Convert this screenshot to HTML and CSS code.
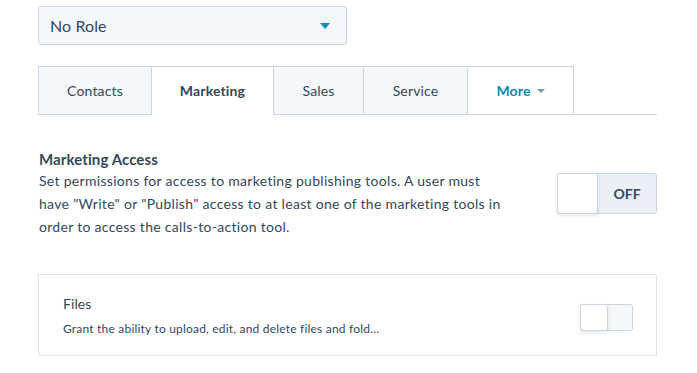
FILE: index.html
```html
<!DOCTYPE html>
<html>
<head>
<meta charset="utf-8">
<link rel="stylesheet" href="styles.css">
</head>
<body>
<div class="page">
  <div class="select">
    <span class="select-label">No Role</span>
    <span class="select-caret"></span>
  </div>

  <div class="tabs">
    <div class="tab tab-contacts">Contacts</div>
    <div class="tab tab-active tab-marketing">Marketing</div>
    <div class="tab tab-sales">Sales</div>
    <div class="tab tab-service">Service</div>
    <div class="tab tab-more">More <span class="more-caret"></span></div>
    <div class="tabs-fill"></div>
  </div>

  <div class="access">
    <div class="access-text">
      <h2 class="access-title">Marketing Access</h2>
      <p class="access-desc">Set permissions for access to marketing publishing tools. A user must have "Write" or "Publish" access to at least one of the marketing tools in order to access the calls-to-action tool.</p>
    </div>
    <div class="toggle">
      <div class="toggle-knob"></div>
      <div class="toggle-label">OFF</div>
    </div>
  </div>

  <div class="card">
    <div class="card-text">
      <div class="card-title">Files</div>
      <div class="card-desc">Grant the ability to upload, edit, and delete files and fold…</div>
    </div>
    <div class="mini-toggle">
      <div class="mini-knob"></div>
      <div class="mini-track"></div>
    </div>
  </div>
</div>
</body>
</html>
```

FILE: styles.css
```css
* { box-sizing: border-box; }
html, body { margin: 0; padding: 0; background: #fff; }
body {
  font-family: Lato, "Open Sans", sans-serif;
  color: #33475b;
}
.page {
  width: 697px;
  padding: 6px 40px 0 38px;
}
.select {
  width: 309px;
  height: 39px;
  background: #f5f8fa;
  border: 1px solid #cbd6e2;
  border-radius: 3px;
  display: flex;
  align-items: center;
  justify-content: space-between;
  padding: 0 16px 0 11px;
}
.select-label { font-size: 16px; color: #33475b; letter-spacing: 0.1px; }
.select-caret {
  width: 0; height: 0;
  border-left: 5.5px solid transparent;
  border-right: 5.5px solid transparent;
  border-top: 6px solid #0091ae;
  margin-top: 1px;
}
.tabs {
  display: flex;
  margin-top: 21px;
  height: 49px;
}
.tab {
  height: 49px;
  display: flex;
  align-items: center;
  justify-content: center;
  font-size: 14px;
  letter-spacing: 0.15px;
  background: #f5f8fa;
  border: 1px solid #cbd6e2;
  border-left: none;
  color: #33475b;
}
.tab-contacts { width: 114px; border-left: 1px solid #cbd6e2; }
.tab-marketing { width: 122px; }
.tab-sales { width: 90px; }
.tab-service { width: 104px; }
.tab-more { width: 106px; }
.tab-active {
  background: #fff;
  border-bottom-color: #fff;
  font-weight: bold;
}
.tab-more {
  background: #fff;
  color: #0091ae;
  font-weight: bold;
}
.more-caret {
  display: inline-block;
  width: 0; height: 0;
  border-left: 4px solid transparent;
  border-right: 4px solid transparent;
  border-top: 4px solid #7c98b6;
  margin-left: 6px;
}
.tabs-fill {
  flex: 1;
  border-bottom: 1px solid #cbd6e2;
}
.access {
  display: flex;
  justify-content: space-between;
  align-items: flex-start;
  margin-top: 35px;
}
.access-text { width: 470px; padding-left: 1px; }
.access-title {
  margin: 0;
  font-size: 15px;
  font-weight: bold;
  line-height: 18px;
  letter-spacing: 0.1px;
}
.access-desc {
  margin: 1px 0 0;
  font-size: 14px;
  line-height: 23px;
  letter-spacing: 0.3px;
}
.toggle {
  margin-top: 23px;
  width: 100px;
  height: 41px;
  display: flex;
  background: #eaf0f6;
  border: 1px solid #cbd6e2;
  border-radius: 3px;
}
.toggle-knob {
  width: 41px;
  height: 41px;
  margin: -1px 0 0 -1px;
  background: #fff;
  border: 1px solid #cbd6e2;
  border-radius: 3px;
  box-shadow: 0 2px 4px rgba(45, 62, 80, 0.12);
}
.toggle-label {
  flex: 1;
  display: flex;
  align-items: center;
  justify-content: center;
  font-size: 14px;
  font-weight: bold;
  color: #33475b;
}
.card {
  margin-top: 36px;
  width: 619px;
  height: 82px;
  border: 1px solid #dfe3eb;
  display: flex;
  align-items: center;
  justify-content: space-between;
  padding: 0 23px 0 24px;
}
.card-title { font-size: 14px; line-height: 18px; margin-top: 1px; letter-spacing: 0.1px; }
.card-desc { font-size: 12px; line-height: 16px; margin-top: 8px; letter-spacing: 0.2px; }
.mini-toggle {
  width: 53px;
  height: 27px;
  display: flex;
  background: #f5f8fa;
  border: 1px solid #cbd6e2;
  border-radius: 3px;
  margin-top: 5px;
}
.mini-knob {
  width: 28px;
  height: 27px;
  margin: -1px 0 0 -1px;
  background: #fff;
  border: 1px solid #cbd6e2;
  border-radius: 3px;
  box-shadow: 0 2px 4px rgba(45, 62, 80, 0.12);
}
.mini-track { flex: 1; }
```
